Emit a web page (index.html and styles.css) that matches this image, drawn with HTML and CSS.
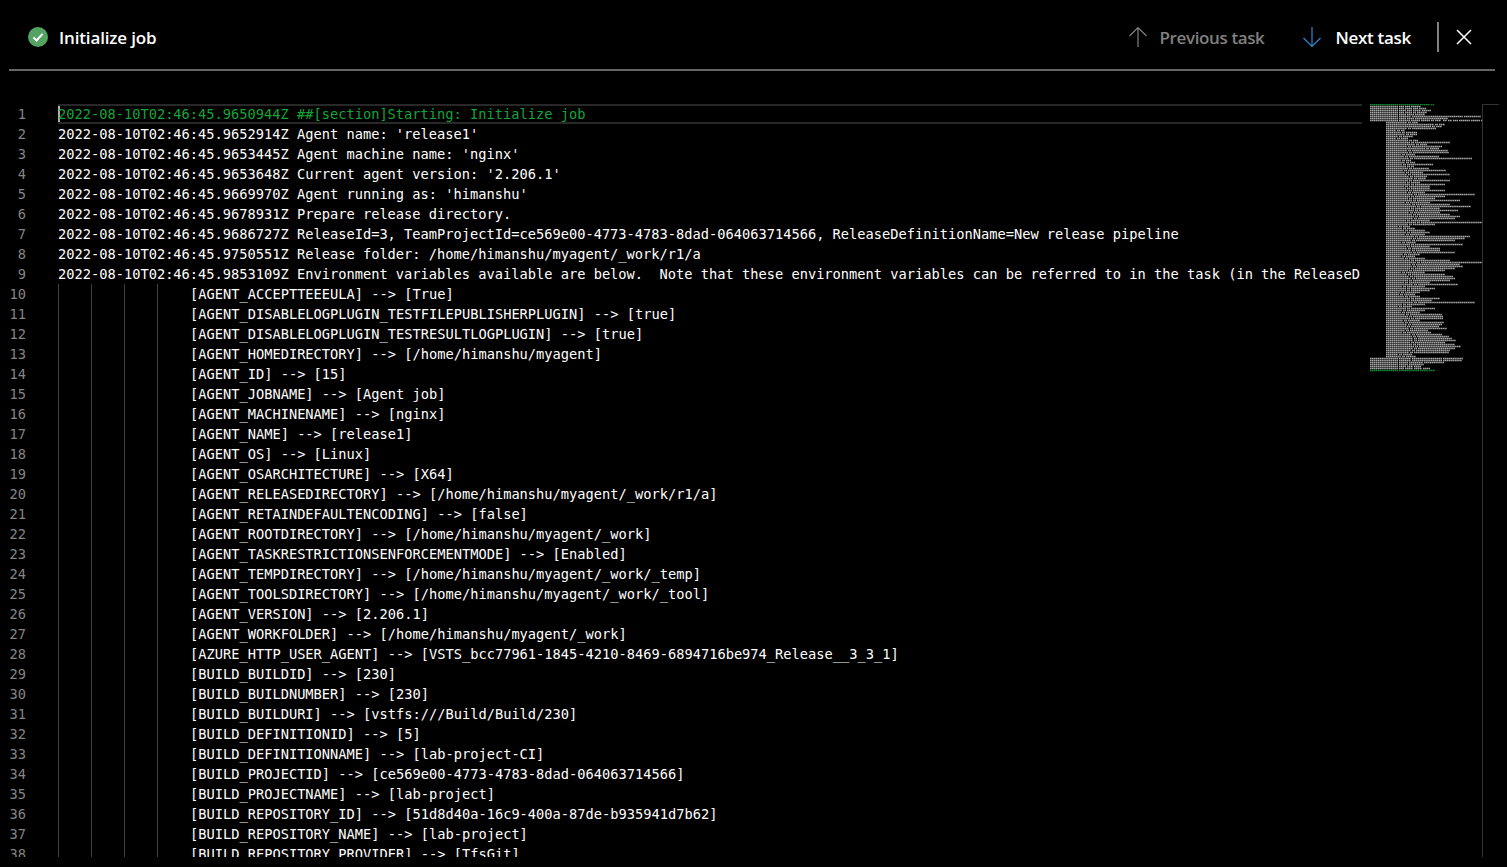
FILE: index.html
```html
<!DOCTYPE html>
<html lang="en">
<head>
<meta charset="utf-8">
<title>Initialize job</title>
<link rel="stylesheet" href="styles.css">
</head>
<body>
<header class="bar">
  <div class="title">
    <svg class="status" viewBox="0 0 20 20" width="20" height="20"><circle cx="10" cy="10" r="10" fill="#55a362"/><path d="M5.4 10.4l3.1 3.1 6.1-6.6" fill="none" stroke="#fff" stroke-width="2"/></svg>
    <span>Initialize job</span>
  </div>
  <nav class="actions">
    <button class="nav nav-off"><svg viewBox="0 0 20 22" width="20" height="22"><path d="M10 21V1.5M1.5 10L10 1.5 18.5 10" fill="none" stroke="#808080" stroke-width="1.2"/></svg><span>Previous task</span></button>
    <button class="nav nav-on"><svg viewBox="0 0 20 22" width="20" height="22"><path d="M10 1v19.5M1.5 12l8.5 8.5 8.5-8.5" fill="none" stroke="#2b88d8" stroke-width="1.2"/></svg><span>Next task</span></button>
    <span class="divider"></span>
    <button class="close" aria-label="Close"><svg viewBox="0 0 16 16" width="16" height="16"><path d="M1 1l14 14M15 1L1 15" fill="none" stroke="#fff" stroke-width="1.5"/></svg></button>
  </nav>
</header>
<main class="editor">
  <div class="lines">
    <div class="row row-active"><span class="num">1</span><span class="code code-green">2022-08-10T02:46:45.9650944Z ##[section]Starting: Initialize job</span></div>
    <div class="row"><span class="num">2</span><span class="code">2022-08-10T02:46:45.9652914Z Agent name: 'release1'</span></div>
    <div class="row"><span class="num">3</span><span class="code">2022-08-10T02:46:45.9653445Z Agent machine name: 'nginx'</span></div>
    <div class="row"><span class="num">4</span><span class="code">2022-08-10T02:46:45.9653648Z Current agent version: '2.206.1'</span></div>
    <div class="row"><span class="num">5</span><span class="code">2022-08-10T02:46:45.9669970Z Agent running as: 'himanshu'</span></div>
    <div class="row"><span class="num">6</span><span class="code">2022-08-10T02:46:45.9678931Z Prepare release directory.</span></div>
    <div class="row"><span class="num">7</span><span class="code">2022-08-10T02:46:45.9686727Z ReleaseId=3, TeamProjectId=ce569e00-4773-4783-8dad-064063714566, ReleaseDefinitionName=New release pipeline</span></div>
    <div class="row"><span class="num">8</span><span class="code">2022-08-10T02:46:45.9750551Z Release folder: /home/himanshu/myagent/_work/r1/a</span></div>
    <div class="row"><span class="num">9</span><span class="code">2022-08-10T02:46:45.9853109Z Environment variables available are below.  Note that these environment variables can be referred to in the task (in the ReleaseD</span></div>
    <div class="row"><span class="num">10</span><span class="code code-env">[AGENT_ACCEPTTEEEULA] --&gt; [True]</span></div>
    <div class="row"><span class="num">11</span><span class="code code-env">[AGENT_DISABLELOGPLUGIN_TESTFILEPUBLISHERPLUGIN] --&gt; [true]</span></div>
    <div class="row"><span class="num">12</span><span class="code code-env">[AGENT_DISABLELOGPLUGIN_TESTRESULTLOGPLUGIN] --&gt; [true]</span></div>
    <div class="row"><span class="num">13</span><span class="code code-env">[AGENT_HOMEDIRECTORY] --&gt; [/home/himanshu/myagent]</span></div>
    <div class="row"><span class="num">14</span><span class="code code-env">[AGENT_ID] --&gt; [15]</span></div>
    <div class="row"><span class="num">15</span><span class="code code-env">[AGENT_JOBNAME] --&gt; [Agent job]</span></div>
    <div class="row"><span class="num">16</span><span class="code code-env">[AGENT_MACHINENAME] --&gt; [nginx]</span></div>
    <div class="row"><span class="num">17</span><span class="code code-env">[AGENT_NAME] --&gt; [release1]</span></div>
    <div class="row"><span class="num">18</span><span class="code code-env">[AGENT_OS] --&gt; [Linux]</span></div>
    <div class="row"><span class="num">19</span><span class="code code-env">[AGENT_OSARCHITECTURE] --&gt; [X64]</span></div>
    <div class="row"><span class="num">20</span><span class="code code-env">[AGENT_RELEASEDIRECTORY] --&gt; [/home/himanshu/myagent/_work/r1/a]</span></div>
    <div class="row"><span class="num">21</span><span class="code code-env">[AGENT_RETAINDEFAULTENCODING] --&gt; [false]</span></div>
    <div class="row"><span class="num">22</span><span class="code code-env">[AGENT_ROOTDIRECTORY] --&gt; [/home/himanshu/myagent/_work]</span></div>
    <div class="row"><span class="num">23</span><span class="code code-env">[AGENT_TASKRESTRICTIONSENFORCEMENTMODE] --&gt; [Enabled]</span></div>
    <div class="row"><span class="num">24</span><span class="code code-env">[AGENT_TEMPDIRECTORY] --&gt; [/home/himanshu/myagent/_work/_temp]</span></div>
    <div class="row"><span class="num">25</span><span class="code code-env">[AGENT_TOOLSDIRECTORY] --&gt; [/home/himanshu/myagent/_work/_tool]</span></div>
    <div class="row"><span class="num">26</span><span class="code code-env">[AGENT_VERSION] --&gt; [2.206.1]</span></div>
    <div class="row"><span class="num">27</span><span class="code code-env">[AGENT_WORKFOLDER] --&gt; [/home/himanshu/myagent/_work]</span></div>
    <div class="row"><span class="num">28</span><span class="code code-env">[AZURE_HTTP_USER_AGENT] --&gt; [VSTS_bcc77961-1845-4210-8469-6894716be974_Release__3_3_1]</span></div>
    <div class="row"><span class="num">29</span><span class="code code-env">[BUILD_BUILDID] --&gt; [230]</span></div>
    <div class="row"><span class="num">30</span><span class="code code-env">[BUILD_BUILDNUMBER] --&gt; [230]</span></div>
    <div class="row"><span class="num">31</span><span class="code code-env">[BUILD_BUILDURI] --&gt; [vstfs:///Build/Build/230]</span></div>
    <div class="row"><span class="num">32</span><span class="code code-env">[BUILD_DEFINITIONID] --&gt; [5]</span></div>
    <div class="row"><span class="num">33</span><span class="code code-env">[BUILD_DEFINITIONNAME] --&gt; [lab-project-CI]</span></div>
    <div class="row"><span class="num">34</span><span class="code code-env">[BUILD_PROJECTID] --&gt; [ce569e00-4773-4783-8dad-064063714566]</span></div>
    <div class="row"><span class="num">35</span><span class="code code-env">[BUILD_PROJECTNAME] --&gt; [lab-project]</span></div>
    <div class="row"><span class="num">36</span><span class="code code-env">[BUILD_REPOSITORY_ID] --&gt; [51d8d40a-16c9-400a-87de-b935941d7b62]</span></div>
    <div class="row"><span class="num">37</span><span class="code code-env">[BUILD_REPOSITORY_NAME] --&gt; [lab-project]</span></div>
    <div class="row"><span class="num">38</span><span class="code code-env">[BUILD_REPOSITORY_PROVIDER] --&gt; [TfsGit]</span></div>
  </div>
  <svg class="minimap" viewBox="0 0.5 112 272" width="112" height="272" aria-hidden="true">
    <path class="mini-green" d="M0 1h28m1 0h20m1 0h10m1 0h3M0 267h28m1 0h20m1 0h8m1 0h6"/>
    <path class="mini-gray" d="M0 3h28m1 0h5m1 0h5m1 0h10M0 5h28m1 0h5m1 0h7m1 0h5m1 0h7M0 7h28m1 0h7m1 0h5m1 0h8m1 0h9M0 9h28m1 0h5m1 0h7m1 0h3m1 0h10M0 11h28m1 0h7m1 0h7m1 0h10M0 13h28m1 0h12m1 0h51m1 0h17M0 15h28m1 0h7m1 0h7m1 0h33M0 17h28m1 0h11m1 0h9m1 0h9m1 0h3m1 0h6m2 0h4m1 0h4m1 0h5m1 0h11m1 0h9m1 0h1
M16 19h21m1 0h3m1 0h6M16 21h48m1 0h3m1 0h6M16 23h45m1 0h3m1 0h6M16 25h21m1 0h3m1 0h24M16 27h10m1 0h3m1 0h4M16 29h15m1 0h3m1 0h11M16 31h19m1 0h3m1 0h7M16 33h12m1 0h3m1 0h10M16 35h10m1 0h3m1 0h7M16 37h22m1 0h3m1 0h5M16 39h24m1 0h3m1 0h35M16 41h29m1 0h3m1 0h7M16 43h21m1 0h3m1 0h30M16 45h39m1 0h3m1 0h9M16 47h21m1 0h3m1 0h36M16 49h22m1 0h3m1 0h36M16 51h15m1 0h3m1 0h9M16 53h18m1 0h3m1 0h30M16 55h23m1 0h3m1 0h58M16 57h15m1 0h3m1 0h5M16 59h19m1 0h3m1 0h5M16 61h16m1 0h3m1 0h26M16 63h20m1 0h3m1 0h3M16 65h22m1 0h3m1 0h16M16 67h17m1 0h3m1 0h38M16 69h19m1 0h3m1 0h13M16 71h21m1 0h3m1 0h38M16 73h23m1 0h3m1 0h13M16 75h27m1 0h3m1 0h8
M16 77h22m1 0h3m1 0h37M16 79h20m1 0h3m1 0h9M16 81h24m1 0h3m1 0h30M16 83h18m1 0h3m1 0h21M16 85h20m1 0h3m1 0h19M16 87h22m1 0h3m1 0h32M16 89h21m1 0h3m1 0h13M16 91h27m1 0h3m1 0h57M16 93h24m1 0h3m1 0h30M16 95h22m1 0h3m1 0h22M16 97h26m1 0h3m1 0h43M16 99h19m1 0h3m1 0h20M16 101h25m1 0h3m1 0h34M16 103h30m1 0h3m1 0h50M16 105h24m1 0h3m1 0h25M16 107h28m1 0h3m1 0h39M16 109h23m1 0h3m1 0h26M16 111h26m1 0h3m1 0h33M16 113h28m1 0h3m1 0h41M16 115h27m1 0h3m1 0h37M16 117h20m1 0h3m1 0h19M16 119h30m1 0h3m1 0h61M16 121h22m1 0h3m1 0h22M16 123h12m1 0h3m1 0h7M16 125h16m1 0h3m1 0h8M16 127h18m1 0h3m1 0h16M16 129h20m1 0h3m1 0h19M16 131h19m1 0h3m1 0h15M16 133h28m1 0h3m1 0h51M16 135h26m1 0h3m1 0h48M16 137h25m1 0h3m1 0h39M16 139h15m1 0h3m1 0h10
M16 141h24m1 0h3m1 0h48M16 143h20m1 0h3m1 0h19M16 145h21m1 0h3m1 0h28M16 147h25m1 0h3m1 0h24M16 149h26m1 0h3m1 0h38M16 151h17m1 0h3m1 0h12M16 153h15m1 0h3m1 0h9M16 155h18m1 0h3m1 0h16M16 157h24m1 0h3m1 0h35M16 159h30m1 0h3m1 0h61M16 161h25m1 0h3m1 0h44M16 163h26m1 0h3m1 0h46M16 165h24m1 0h3m1 0h40M16 167h22m1 0h3m1 0h32M16 169h15m1 0h3m1 0h19M16 171h21m1 0h3m1 0h33M16 173h23m1 0h3m1 0h39M16 175h25m1 0h3m1 0h39M16 177h22m1 0h3m1 0h37M16 179h18m1 0h3m1 0h21M16 181h27m1 0h3m1 0h40M16 183h16m1 0h3m1 0h18M16 185h20m1 0h3m1 0h24M16 187h20m1 0h3m1 0h19M16 189h14m1 0h3m1 0h15M16 191h13m1 0h3m1 0h11M16 193h18m1 0h3m1 0h11M16 195h24m1 0h3m1 0h25M16 197h20m1 0h3m1 0h21M16 199h27m1 0h3m1 0h57M16 201h16m1 0h3m1 0h18M16 203h12m1 0h3m1 0h9
M16 205h20m1 0h3m1 0h24M16 207h16m1 0h3m1 0h18M16 209h15m1 0h3m1 0h14M16 211h19m1 0h3m1 0h32M16 213h22m1 0h3m1 0h30M16 215h24m1 0h3m1 0h28M16 217h17m1 0h3m1 0h12M16 219h18m1 0h3m1 0h35M16 221h21m1 0h3m1 0h30M16 223h20m1 0h3m1 0h28M16 225h23m1 0h3m1 0h33M16 227h19m1 0h3m1 0h18M16 229h16m1 0h3m1 0h24M16 231h25m1 0h3m1 0h26M16 233h26m1 0h3m1 0h32M16 235h27m1 0h3m1 0h34M16 237h27m1 0h3m1 0h38M16 239h24m1 0h3m1 0h30M16 241h26m1 0h3m1 0h38M16 243h28m1 0h3m1 0h42M16 245h27m1 0h3m1 0h37M16 247h25m1 0h3m1 0h34M16 249h23m1 0h3m1 0h35M16 251h12m1 0h3m1 0h9M16 253h15m1 0h3m1 0h10
M0 255h28m1 0h12m1 0h30m1 0h20M0 257h28m1 0h12m1 0h30m1 0h19M0 259h28m1 0h9m1 0h14m1 0h20M0 261h28m1 0h9m1 0h15M0 263h28m1 0h7m1 0h6m1 0h7M0 265h28m1 0h5m1 0h8m1 0h8m1 0h7"/>
  </svg>
  <div class="scrollbar"></div>
</main>
</body>
</html>
```
FILE: styles.css
```css
html, body {
  margin: 0;
  height: 867px;
  overflow: hidden;
  background: #000;
  color: #fff;
}

.bar {
  display: flex;
  justify-content: space-between;
  align-items: center;
  height: 69px;
  margin: 0 12px 0 9px;
  padding: 0 23px 0 19px;
  border-bottom: 2px solid #666;
  font-family: "Open Sans", "Noto Sans", sans-serif;
  font-size: 17px;
  font-weight: 600;
  letter-spacing: -0.3px;
}

.title {
  display: flex;
  align-items: center;
  gap: 11px;
  margin-top: 5px;
  letter-spacing: -0.15px;
}

.status {
  display: block;
}

.actions {
  display: flex;
  align-items: center;
  margin-top: 5px;
}

.nav {
  display: flex;
  align-items: center;
  gap: 13px;
  padding: 0;
  border: 0;
  background: none;
  font: inherit;
  letter-spacing: inherit;
}

.nav svg {
  display: block;
}

.nav-off {
  gap: 12px;
  color: #808080;
  margin-right: 38px;
  letter-spacing: -0.38px;
}

.nav-on {
  color: #fff;
}

.divider {
  width: 2px;
  height: 30px;
  margin: 0 17px 0 26px;
  background: #808080;
}

.close {
  display: block;
  padding: 0;
  border: 0;
  background: none;
  height: 16px;
}

.close svg {
  display: block;
}

.editor {
  display: flex;
  align-items: flex-start;
  height: 753px;
  margin-top: 33px;
}

.lines {
  flex: none;
  width: 1362px;
  height: 753px;
  overflow: hidden;
  font-family: "DejaVu Sans Mono", "Liberation Mono", monospace;
  font-size: 13.7px;
  line-height: 20px;
}

.row {
  display: flex;
  height: 20px;
  white-space: pre;
}

.num {
  flex: none;
  width: 26px;
  margin-right: 32px;
  text-align: right;
  color: #858585;
}

.code {
  flex: 1;
  min-width: 0;
  overflow: hidden;
}

.code-green {
  color: #13a538;
}

.code-env {
  padding-left: 132px;
  background: repeating-linear-gradient(90deg, #404040 0 1px, transparent 1px 33px) 0 0 / 132px 100% no-repeat;
}

.row-active {
  position: relative;
}

.row-active .code {
  box-shadow: inset 0 2px 0 #282828, inset 0 -2px 0 #282828, inset 2px 0 0 #aeafad;
}

.minimap {
  flex: none;
  display: block;
  margin-left: 8px;
}

.mini-gray,
.mini-green {
  fill: none;
  stroke-width: 1.5;
  stroke-dasharray: 1.5 0.4;
}

.mini-gray {
  stroke: #a8a8a8;
}

.mini-green {
  stroke: #0c8a30;
}

.scrollbar {
  flex: none;
  box-sizing: border-box;
  width: 17px;
  height: 753px;
  border-left: 1px solid #333;
  border-top: 1px solid #333;
}
```
